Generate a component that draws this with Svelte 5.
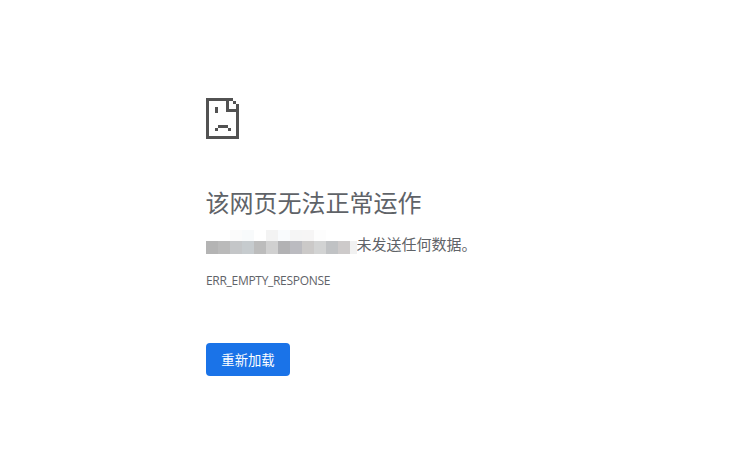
<script lang="ts">
  const cellColors = [
    { left: 0, color: '#b4b4b4' },
    { left: 12, color: '#bababa' },
    { left: 24, color: '#c4c6c8' },
    { left: 36, color: '#c6cbce' },
    { left: 48, color: '#bcbcbc' },
    { left: 60, color: '#d0d0d0' },
    { left: 72, color: '#b2b2b4' },
    { left: 84, color: '#bbbbc0' },
    { left: 96, color: '#cbc9c8' },
    { left: 108, color: '#d2d3d3' },
    { left: 120, color: '#c0c2c4' },
    { left: 132, color: '#cdcaca' },
    { left: 144, color: '#f1f1f1' }
  ]
  const topCells = [
    { left: 24, color: '#fbfbfb' },
    { left: 36, color: '#f8fafb' },
    { left: 60, color: '#f3f3f3' },
    { left: 72, color: '#f9fbfd' },
    { left: 84, color: '#f5f5f5' },
    { left: 96, color: '#f6f5f5' },
    { left: 108, color: '#fdfdfd' }
  ]
</script>

<main class="page">
  <svg class="sad-icon" width="33" height="41" viewBox="0 0 33 41" shape-rendering="crispEdges" aria-hidden="true">
    <path
      fill="#525252"
      fill-rule="evenodd"
      d="M0 0H27V3H30V6H33V41H0ZM3 3V38H30V14H20V3ZM23 3V11H30V6H27V3Z"
    />
    <path fill="#525252" d="M9 9H12V15H9ZM12 27H22V30H12ZM9 30H12V33H9ZM22 30H25V33H22Z" />
  </svg>

  <h1>该网页无法正常运作</h1>

  <p class="summary">
    <span class="blur-host" aria-hidden="true">
      {#each topCells as cell}
        <span class="cell top" style="left: {cell.left}px; background: {cell.color}"></span>
      {/each}
      {#each cellColors as cell}
        <span class="cell" style="left: {cell.left}px; background: {cell.color}"></span>
      {/each}
    </span>
    <span>未发送任何数据。</span>
  </p>

  <p class="code">ERR_EMPTY_RESPONSE</p>

  <button class="reload">重新加载</button>
</main>

<style>
  :global(body) {
    margin: 0;
    background: #fff;
  }

  .page {
    padding: 98px 0 0 206px;
    font-family: "Open Sans", "Noto Sans CJK SC", sans-serif;
    color: #5f6368;
  }

  .sad-icon {
    display: block;
  }

  h1 {
    margin: 46px 0 0 -0.5px;
    font-size: 24px;
    line-height: 36px;
    font-weight: 400;
    color: #5f6368;
  }

  .summary {
    display: flex;
    align-items: flex-start;
    margin: 11px 0 0;
    height: 24px;
    font-size: 15px;
    line-height: 24px;
  }

  .blur-host {
    position: relative;
    display: block;
    flex: none;
    width: 150.5px;
    height: 24px;
    margin-top: -2px;
    overflow: hidden;
  }

  .cell {
    position: absolute;
    top: 11px;
    width: 12px;
    height: 13px;
  }

  .cell.top {
    top: 0;
    height: 11px;
  }

  .code {
    margin: 17px 0 0;
    font-size: 12px;
    line-height: 16px;
    letter-spacing: -0.3px;
  }

  .reload {
    display: block;
    margin-top: 54px;
    width: 84px;
    height: 33px;
    padding: 0;
    border: none;
    border-radius: 4px;
    background: #1a73e8;
    color: #fff;
    font-family: inherit;
    font-size: 13.33px;
  }
</style>
